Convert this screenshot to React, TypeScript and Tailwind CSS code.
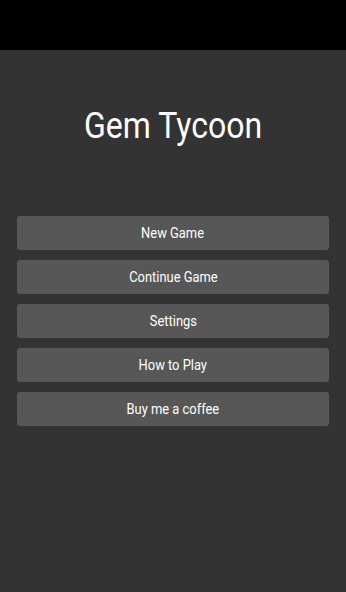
export default function App() {
  const items = ['New Game', 'Continue Game', 'Settings', 'How to Play', 'Buy me a coffee'];

  return (
    <div className="w-[346px] h-[592px] flex flex-col bg-[#333333] font-['Roboto',sans-serif]">
      <div className="h-[50px] bg-black shrink-0"></div>
      <div className="flex flex-col px-[17px]">
        <h1 className="mt-[51px] h-[50px] flex items-center justify-center text-white text-[36px] leading-none">
          <span className="inline-block scale-x-[0.89]">Gem Tycoon</span>
        </h1>
        <div className="mt-[65px] flex flex-col gap-[10px]">
          {items.map((label) => (
            <button
              key={label}
              className="h-[34px] w-full rounded-[3px] bg-[#575757] text-white text-[15px] flex items-center justify-center"
            >
              <span className="inline-block scale-x-[0.86]">{label}</span>
            </button>
          ))}
        </div>
      </div>
    </div>
  );
}
